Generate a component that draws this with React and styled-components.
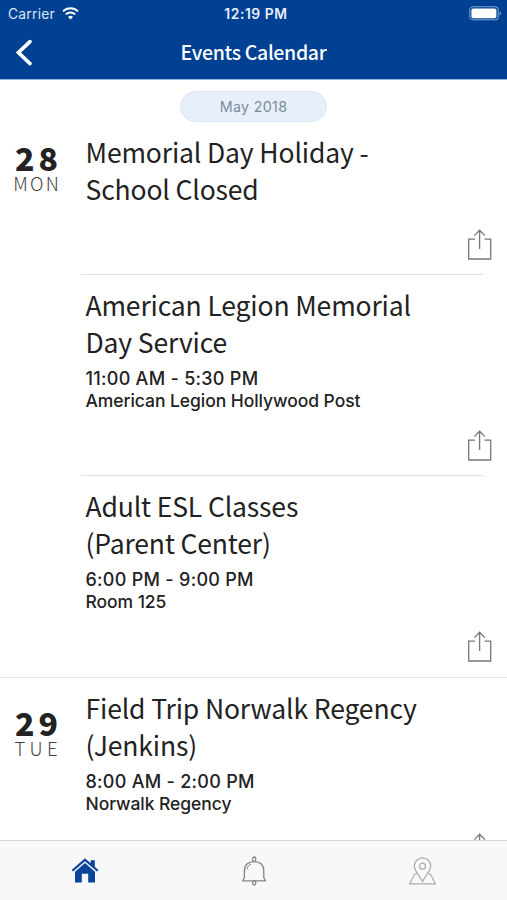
import React from 'react';
import styled, { createGlobalStyle } from 'styled-components';

const GlobalStyle = createGlobalStyle`
    * {
        box-sizing: border-box;
    }

    body {
        margin: 0;
        background: #fff;
        color: #222;
        font-family: Inter, "Liberation Sans", sans-serif;
    }
`;

const Screen = styled.div`
    display: flex;
    flex-direction: column;
    width: 507px;
    height: 900px;
    overflow: hidden;
`;

const Header = styled.header`
    flex: none;
    height: 80px;
    background: #004193;
    color: #fff;
    border-bottom: 1px solid #8fb4dc;
`;

const StatusBar = styled.div`
    display: grid;
    grid-template-columns: 1fr auto 1fr;
    align-items: center;
    height: 27px;
    padding: 0 5px 0 8px;
    font-size: 13.8px;
`;

const Carrier = styled.div`
    display: flex;
    align-items: center;
    gap: 7px;
    color: #dbe7f5;
    letter-spacing: 0.25px;
`;

const Clock = styled.div`
    font-weight: 600;
    font-size: 13.8px;
    letter-spacing: 0.6px;
    color: #e8f0fa;
    padding-left: 2px;
`;

const Battery = styled.svg`
    justify-self: end;
`;

const NavBar = styled.div`
    display: grid;
    grid-template-columns: 60px 1fr 60px;
    align-items: center;
    height: 51px;
`;

const BackButton = styled.button`
    display: flex;
    height: 30px;
    padding: 0 0 0 14px;
    border: 0;
    background: none;
    color: #fff;
`;

const NavTitle = styled.h1`
    margin: 0;
    padding-bottom: 2px;
    text-align: center;
    font: 500 19.5px/30px "Noto Sans CJK JP", sans-serif;
    letter-spacing: -0.33px;
`;

const List = styled.main`
    flex: 1;
    min-height: 0;
    overflow: hidden;
`;

const Month = styled.div`
    width: 147px;
    height: 31px;
    margin: 11px auto 0 180px;
    border: 1px solid #d8e5f3;
    border-radius: 16px;
    background: #e7f0fa;
    color: #7d8b9c;
    text-align: center;
    font-size: 14.3px;
    line-height: 29px;
    letter-spacing: 0.3px;
`;

const Group = styled.section`
    display: flex;
    border-bottom: 1px solid #e4e4e4;
`;

const DateCol = styled.div`
    flex: none;
    width: 81px;
    padding: ${({ $top }) => $top}px 9px 0 0;
    text-align: center;
`;

const DayNumber = styled.div`
    font: 900 32px/34px "Noto Sans CJK JP", sans-serif;
    letter-spacing: 4px;
    margin-right: -5px;
`;

const DayName = styled.div`
    font: 300 18.5px/18px "Noto Sans CJK JP", sans-serif;
    letter-spacing: ${({ $spacing }) => $spacing}px;
    margin-right: -${({ $spacing }) => $spacing}px;
    color: #444;
`;

const Events = styled.div`
    flex: 1;
`;

const Event = styled.article`
    display: flex;
    flex-direction: column;
    height: ${({ $short }) => ($short ? 153 : 201)}px;
    padding: 12px 15px 14px 4.5px;
`;

const Divider = styled.hr`
    width: 402px;
    height: 1px;
    margin: -1px 0 0;
    border: 0;
    background: #dfdfdf;
`;

const Title = styled.h2`
    margin: 0;
    font: 400 26.5px/36.6px "Noto Sans CJK JP", sans-serif;
    letter-spacing: -0.14px;
    white-space: pre-line;
`;

const Time = styled.div`
    margin-top: 8px;
    font-size: 18px;
    font-weight: 500;
    line-height: 22px;
    letter-spacing: 0.28px;
`;

const Place = styled.div`
    font-size: 17.5px;
    font-weight: 500;
    line-height: 22px;
    letter-spacing: -0.06px;
`;

const ShareButton = styled.button`
    display: flex;
    align-self: flex-end;
    margin-top: auto;
    padding: 0;
    border: 0;
    background: none;
    color: #777;
`;

const TabBar = styled.nav`
    flex: none;
    display: grid;
    grid-template-columns: repeat(3, 1fr);
    height: 60px;
    border-top: 1px solid #d6d6d6;
    background: #f8f8f8;
`;

const Tab = styled.a`
    display: flex;
    align-items: center;
    justify-content: center;
    color: ${({ $active }) => ($active ? '#0b449b' : '#858585')};
`;

const WifiIcon = () => (
    <svg width="17" height="13" viewBox="0 0 17 13" fill="none" stroke="#fff" strokeWidth="2">
        <path d="M1 4.4a10.7 10.7 0 0 1 15 0" />
        <path d="M3.8 7.4a6.7 6.7 0 0 1 9.4 0" />
        <path d="M8.5 12.4 6 9.9a3.6 3.6 0 0 1 5 0z" fill="#fff" stroke="none" />
    </svg>
);

const BatteryIcon = () => (
    <Battery width="33" height="15" viewBox="0 0 33 15">
        <rect x="0.8" y="0.8" width="28.4" height="13" rx="3.4" fill="none" stroke="#7fa3d0" strokeWidth="1.1" />
        <rect x="2.4" y="2.4" width="25" height="9.8" rx="1.8" fill="#fff" />
        <path d="M30.6 5.2c2 .8 2 3.4 0 4.2z" fill="#7fa3d0" />
    </Battery>
);

const BackIcon = () => (
    <svg width="20" height="30" viewBox="0 0 20 30" fill="none" stroke="currentColor" strokeWidth="3.6">
        <path d="M16 3.6 4.4 14.6l11.6 11" strokeLinecap="round" />
    </svg>
);

const ShareIcon = () => (
    <svg width="25" height="32" viewBox="0 0 25 32" fill="none" stroke="currentColor" strokeWidth="1.3">
        <path d="M8 10.2H1.7V30h22V10.2h-6.2" />
        <path d="M12.6 20V1.4M7.4 6.6l5.2-5.3 5.2 5.3" />
    </svg>
);

const HomeIcon = () => (
    <svg width="28" height="26" viewBox="0 0 28 26" fill="currentColor">
        <path d="M19.6 2.2h4.2v7.4l-4.2-3.6z" />
        <path d="M14 .3 27.4 12l-1.4 1.6L14 3.2 2 13.6.6 12z" />
        <path d="M14 5 24 13.8V24.6h-6.8v-8.8h-6.4v8.8H4V13.8z" />
    </svg>
);

const BellIcon = () => (
    <svg width="26" height="30" viewBox="0 0 26 30" fill="none" stroke="currentColor" strokeWidth="1.3">
        <rect x="11.7" y="1" width="3" height="4.6" rx="1.5" />
        <path d="M3.4 21.6V15C3.4 9 7 5.6 13.2 5.6S22.8 9 22.8 15v6.6l1.6 3.2H1.8z" />
        <path d="M6 13.4c.3-2.8 1.6-4.4 4-5.2" strokeWidth="1" />
        <rect x="11.7" y="24.8" width="3" height="4.2" rx="1.5" />
    </svg>
);

const MapIcon = () => (
    <svg width="28" height="28" viewBox="0 0 28 28" fill="none" stroke="#aaa" strokeWidth="1.2">
        <path d="M13.5 24.4C11.1 19.4 5.3 14 5.3 9a8.2 8.2 0 0 1 16.4 0c0 5-5.8 10.4-8.2 15.4z" />
        <circle cx="13.5" cy="9.2" r="3" />
        <path d="M7.8 17H5.6L.6 26.8h25.8l-5-9.8h-2.2" />
    </svg>
);

const days = [
    {
        number: '28',
        name: 'MON',
        top: 18,
        spacing: 2.2,
        events: [
            { title: 'Memorial Day Holiday -\nSchool Closed' },
            {
                title: 'American Legion Memorial\nDay Service',
                time: '11:00 AM - 5:30 PM',
                place: 'American Legion Hollywood Post'
            },
            {
                title: 'Adult ESL Classes\n(Parent Center)',
                time: '6:00 PM - 9:00 PM',
                place: 'Room 125'
            }
        ]
    },
    {
        number: '29',
        name: 'TUE',
        top: 27,
        spacing: 4.3,
        events: [
            {
                title: 'Field Trip Norwalk Regency\n(Jenkins)',
                time: '8:00 AM - 2:00 PM',
                place: 'Norwalk Regency'
            }
        ]
    }
];

const EventItem = ({ event }) => (
    <Event $short={!event.time}>
        <Title>{event.title}</Title>
        {event.time && <Time>{event.time}</Time>}
        {event.place && <Place>{event.place}</Place>}
        <ShareButton aria-label="Share">
            <ShareIcon />
        </ShareButton>
    </Event>
);

const App = () => (
    <Screen>
        <GlobalStyle />
        <Header>
            <StatusBar>
                <Carrier>
                    Carrier <WifiIcon />
                </Carrier>
                <Clock>12:19 PM</Clock>
                <BatteryIcon />
            </StatusBar>
            <NavBar>
                <BackButton aria-label="Back">
                    <BackIcon />
                </BackButton>
                <NavTitle>Events Calendar</NavTitle>
            </NavBar>
        </Header>
        <List>
            <Month>May 2018</Month>
            {days.map((day) => (
                <Group key={day.number}>
                    <DateCol $top={day.top}>
                        <DayNumber>{day.number}</DayNumber>
                        <DayName $spacing={day.spacing}>{day.name}</DayName>
                    </DateCol>
                    <Events>
                        {day.events.map((event, i) => (
                            <React.Fragment key={event.title}>
                                {i > 0 && <Divider />}
                                <EventItem event={event} />
                            </React.Fragment>
                        ))}
                    </Events>
                </Group>
            ))}
        </List>
        <TabBar>
            <Tab $active aria-label="Home">
                <HomeIcon />
            </Tab>
            <Tab aria-label="Notifications">
                <BellIcon />
            </Tab>
            <Tab aria-label="Map">
                <MapIcon />
            </Tab>
        </TabBar>
    </Screen>
);

export default App;
